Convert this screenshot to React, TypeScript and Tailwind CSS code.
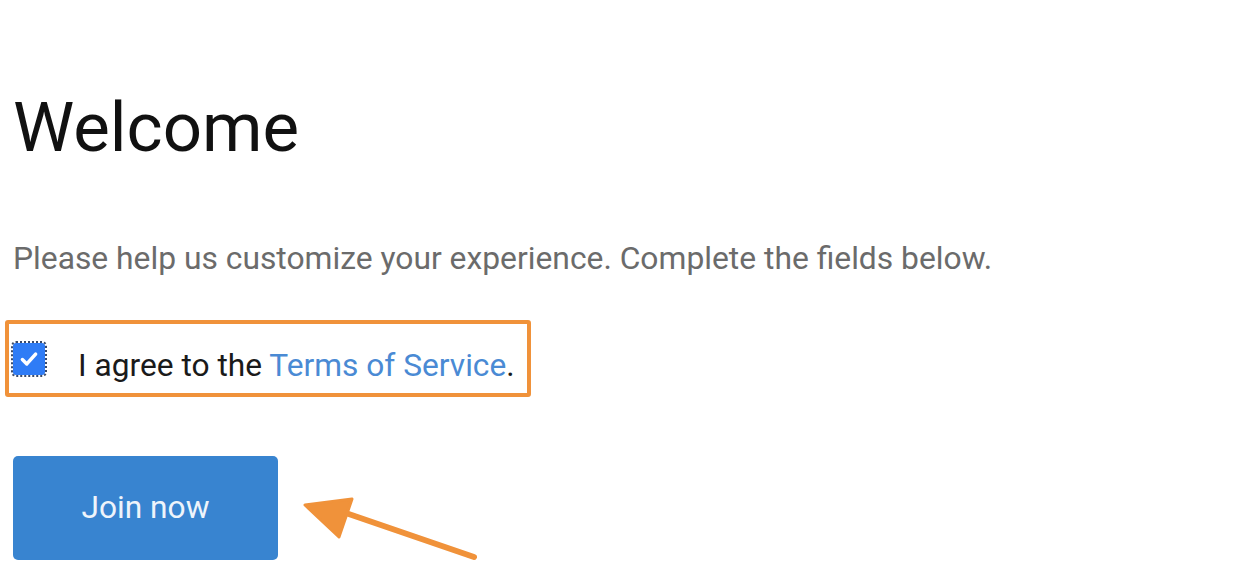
export default function App() {
  return (
    <div className="w-[1248px] h-[572px] bg-white overflow-hidden relative font-['Roboto',sans-serif]">
      <div className="pl-[13px] pt-[86px] flex flex-col items-start">
        <h1 className="text-[69px] leading-[84px] text-[#111] font-normal">Welcome</h1>
        <p className="mt-[69px] text-[31.8px] leading-[38px] text-[#6b6b6b]">
          Please help us customize your experience. Complete the fields below.
        </p>
        <div className="mt-[43px] -ml-[8px] w-[526px] h-[77px] border-4 border-[#f0923a] rounded-[3px] flex items-center pl-[4px]">
          <span className="w-[32px] h-[32px] outline-2 outline-dotted outline-[#3a4a6a] bg-[#2f7cf6] rounded-[3px] flex items-center justify-center">
            <svg width="22" height="22" viewBox="0 0 20 20" fill="none">
              <path d="M4 10.5l4 4 8-9" stroke="white" strokeWidth="3.2" strokeLinecap="round" strokeLinejoin="round" />
            </svg>
          </span>
          <span className="ml-[33px] pt-[14px] text-[31.7px] leading-[38px] text-[#1a1a1a]">
            I agree to the <span className="text-[#4a8ad4]">Terms of Service</span>.
          </span>
        </div>
        <button className="mt-[59px] w-[265px] h-[104px] bg-[#3884d0] rounded-[5px] text-[#eef4fb] text-[31.7px]">
          Join now
        </button>
      </div>
      <svg className="absolute left-0 top-0" width="1248" height="572" viewBox="0 0 1248 572">
        <path d="M474 557 L340 511" stroke="#f0923a" strokeWidth="6" strokeLinecap="round" />
        <path d="M305 505 L352 499 L339 537 Z" fill="#f0923a" stroke="#f0923a" strokeWidth="3" strokeLinejoin="round" />
      </svg>
    </div>
  );
}
